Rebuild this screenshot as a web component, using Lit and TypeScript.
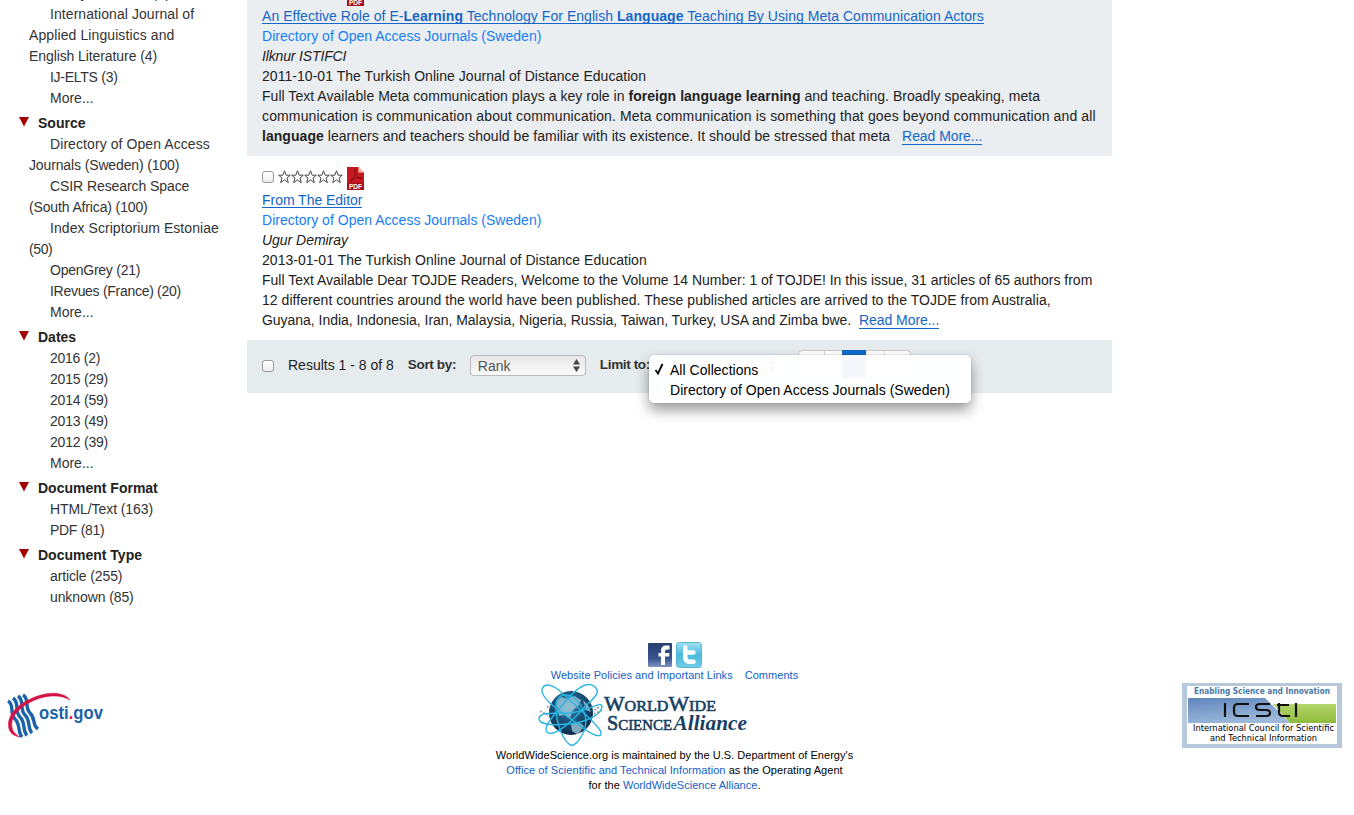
import { LitElement, html, css, svg } from 'lit';
import { customElement } from 'lit/decorators.js';
import { styleMap } from 'lit/directives/style-map.js';

type Line = [text: string, tracking: number];
interface Group { title: string; items: Line[][]; }

const groups: Group[] = [
  { title: '', items: [
    [['Study and Test (4)', .4]],
    [['International Journal of', .07], ['Applied Linguistics and', .1], ['English Literature (4)', -.09]],
    [['IJ-ELTS (3)', -.27]], [['More...', 0]]] },
  { title: 'Source', items: [
    [['Directory of Open Access', .08], ['Journals (Sweden) (100)', -.13]],
    [['CSIR Research Space', -.08], ['(South Africa) (100)', -.14]],
    [['Index Scriptorium Estoniae', .06], ['(50)', -.4]],
    [['OpenGrey (21)', -.25]], [['IRevues (France) (20)', -.29]], [['More...', 0]]] },
  { title: 'Dates', items: [
    [['2016 (2)', -.25]], [['2015 (29)', -.22]], [['2014 (59)', -.22]], [['2013 (49)', -.22]], [['2012 (39)', -.22]], [['More...', 0]]] },
  { title: 'Document Format', items: [[['HTML/Text (163)', -.08]], [['PDF (81)', -.3]]] },
  { title: 'Document Type', items: [[['article (255)', -.12]], [['unknown (85)', -.1]]] },
];

const track = (n: number) => styleMap({ letterSpacing: `${n}px` });

const pdfIcon = html`<svg class="pdf" width="18" height="24" viewBox="0 0 18 24">
  <path d="M0 0H11.500L17 5.500V23H0Z" fill="#c81922"/><path d="M0 15.500H17V23H0Z" fill="#a8121b"/>
  <path d="M11.500 0L17 5.500H11.500Z" fill="#f6c3b0"/>
  <path d="M3 14C7 12 9 7 8.500 3C8 1 7 3 8.500 6C10 10 13 12 15.500 11.500C15 10 8 10 3 14Z" fill="none" stroke="#7d0d13" stroke-width=".9"/>
  <text x="2" y="21.500" font-family="Liberation Sans" font-weight="700" font-size="6.500" textLength="13" fill="#fff">PDF</text></svg>`;

const star = (x: number) => svg`<path transform="translate(${x} 0)" d="M6.500 .8L8.200 5.200H12.300L9 8L10.300 12.700L6.500 9.900L2.700 12.700L4 8L.7 5.200H4.800Z" fill="#fff" stroke="#333" stroke-width=".9"/>`;

const arrows = html`<svg width="9" height="13"><path d="M4.500 0L8 5.500H1ZM4.500 13L8 7.500H1Z" fill="#444"/></svg>`;

@customElement('app-root')
export class AppRoot extends LitElement {
  static styles = css`
    :host { display: block; height: 815px; overflow: hidden; background: #fff; color: #222; font: 14px/20px "Liberation Sans", Arial, sans-serif; }
    * { box-sizing: border-box; }
    .page { display: flex; height: 642px; align-items: flex-start; }
    aside { width: 247px; height: 642px; padding: 0 0 0 29px; line-height: 21px; overflow: hidden; white-space: nowrap; color: #333; display: flex; flex-direction: column; margin-left: 0; }
    .item:first-child { margin-top: -17px; }
    .item { text-indent: 21px; }
    .line { display: block; }
    .item .line + .line { text-indent: 0; }
    .head { display: flex; margin: 4px 0 0 -10px; font-weight: bold; color: #222; height: 21px; }
    .head svg { margin: 4px 9px 0 0; }
    main { width: 865px; white-space: nowrap; }
    .result { padding: 6px 15px 10px; }
    .shade { background: #ebeef1; height: 156px; overflow: hidden; position: relative; }
    .shade .pdf { position: absolute; left: 100px; top: -17px; }
    .white { padding-top: 10px; height: 184px; }
    .icons { display: flex; height: 24px; align-items: flex-start; }
    .icons .check { margin-top: 5px; }
    .icons .stars { margin: 4px 3px 0 4px; }
    .icons .pdf { margin-top: 1px; }
    .check { width: 12px; height: 12px; border: 1px solid #999; border-radius: 3px; background: linear-gradient(#fff, #eee); flex: none; }
    .title, .more { color: #1466c8; border-bottom: 1px solid #1466c8; }
    .title { display: inline-block; height: 18px; line-height: 20px; }
    .titlerow { height: 20px; }
    .src { color: #187ef5; letter-spacing: .02px; }
    .t1 { letter-spacing: .041px; }
    .t2 { letter-spacing: .035px; }
    .t3 { letter-spacing: .137px; }
    .t4 { letter-spacing: .048px; }
    .t5 { letter-spacing: -.01px; }
    .t6 { letter-spacing: -.035px; }
    .t7 { letter-spacing: -.15px; }
    .more { margin-left: 8px; line-height: 16px; letter-spacing: -.06px; }
    .t6 .more { margin-left: 4px; }
    .bar { display: flex; height: 53px; background: #e6ebee; padding: 15px; position: relative; }
    .bar .check { margin-top: 5px; }
    .count { margin: 0 14px; }
    .bar b { color: #333; font-size: 13.5px; letter-spacing: -.35px; width: 48px; flex: none; }
    .select { margin: 0 14px; width: 116px; height: 21px; border: 1px solid #bbb; border-radius: 4px; background: linear-gradient(#e8e8e8, #fafafa); padding: 0 4px 0 7px; color: #555; display: flex; justify-content: space-between; align-items: center; flex: none; }
    .limit { width: 124px; margin-left: 9px; justify-content: flex-end; }
    .pages { position: absolute; left: 551px; top: 10px; width: 113px; height: 28px; border: 1px solid #ccc; border-radius: 4px; background: #fff; display: grid; grid-template-columns: 26px 18px 23px 19px 1fr; }
    .pages i { border-right: 1px solid #ddd; }
    .pages i:nth-child(3) { background: #0f69c8; margin: -1px 0 -1px -1px; border: 0; }
    .pages i:last-child { border: 0; }
    .menu { position: absolute; left: 402px; top: 15px; width: 322px; height: 48px; border-radius: 5px; background: rgba(255,255,255,.955); box-shadow: 0 0 1px rgba(0,0,0,.5), 0 7px 14px rgba(0,0,0,.4); padding: 5px 0 0 21px; color: #000; letter-spacing: .03px; }
    .menu svg { position: absolute; left: 5px; top: 8px; }
    footer { display: flex; justify-content: space-between; align-items: flex-start; }
    .osti { margin: 48px 0 0 5px; width: 100px; }
    .center { width: 400px; margin-left: 62px; text-align: center; font-size: 11px; line-height: 15px; color: #000; white-space: nowrap; letter-spacing: .03px; }
    .center a { color: #1460c8; }
    .social { display: flex; justify-content: center; gap: 4px; height: 26px; }
    .links { display: flex; justify-content: center; gap: 12px; letter-spacing: .05px; }
    .office { letter-spacing: .07px; }
    .wws { display: block; margin: 0 0 1px 61px; }
    .icsti { margin: 41px 12px 0 0; }
  `;

  render() {
    return html`
      <div class="page">
        <aside>${groups.map(g => html`
          ${g.title ? html`<div class="head"><svg width="10" height="10"><path d="M0 0H10L5 9.500Z" fill="#a00000"/></svg>${g.title}</div>` : ''}
          ${g.items.map(i => html`<div class="item">${i.map(([text, n]) => html`<span class="line" style=${track(n)}>${text}</span>`)}</div>`)}`)}
        </aside>
        <main>
          <div class="result shade">${pdfIcon}
            <div class="titlerow t1"><span class="title">An Effective Role of E-<b>Learning</b> Technology For English <b>Language</b> Teaching By Using Meta Communication Actors</span></div>
            <div class="src">Directory of Open Access Journals (Sweden)</div>
            <div class="t7"><em>Ilknur ISTIFCI</em></div>
            <div class="t1">2011-10-01 The Turkish Online Journal of Distance Education</div>
            <div class="t2">Full Text Available Meta communication plays a key role in <b>foreign language learning</b> and teaching. Broadly speaking, meta</div>
            <div class="t3">communication is communication about communication. Meta communication is something that goes beyond communication and all</div>
            <div class="t4"><b>language</b> learners and teachers should be familiar with its existence. It should be stressed that meta <span class="more">Read More...</span></div>
          </div>
          <div class="result white">
            <div class="icons"><span class="check"></span><svg class="stars" width="66" height="14">${[0, 13, 26, 39, 52].map(star)}</svg>${pdfIcon}</div>
            <div class="titlerow t6"><span class="title">From The Editor</span></div>
            <div class="src">Directory of Open Access Journals (Sweden)</div>
            <div class="t6"><em>Ugur Demiray</em></div>
            <div class="t2">2013-01-01 The Turkish Online Journal of Distance Education</div>
            <div class="t5">Full Text Available Dear TOJDE Readers, Welcome to the Volume 14 Number: 1 of TOJDE! In this issue, 31 articles of 65 authors from</div>
            <div class="t4">12 different countries around the world have been published. These published articles are arrived to the TOJDE from Australia,</div>
            <div class="t6">Guyana, India, Indonesia, Iran, Malaysia, Nigeria, Russia, Taiwan, Turkey, USA and Zimba bwe. <span class="more">Read More...</span></div>
          </div>
          <div class="bar">
            <span class="check"></span><span class="count">Results 1 - 8 of 8</span><b>Sort by:</b>
            <span class="select">Rank${arrows}</span>
            <b>Limit to:</b>
            <span class="select limit">${arrows}</span>
            <div class="pages"><i></i><i></i><i></i><i></i><i></i></div>
            <div class="menu"><svg width="12" height="13"><path d="M1.500 7L4 10.500L8.500 1" fill="none" stroke="#000" stroke-width="1.800"/></svg>All Collections<br>Directory of Open Access Journals (Sweden)</div>
          </div>
        </main>
      </div>
      <footer>
        <svg class="osti" width="100" height="50" viewBox="5 690 100 50">
          <g fill="none" stroke="#1b63a8" stroke-width="3.400">
            <path d="M8 701C15 705 9 713 15 719S17 731 22 737"/><path d="M13 698C20 703 14 711 20 717S22 730 27 735.500"/><path d="M18 696C25 701 19 709 25 715S27 728 32 733"/><path d="M23 695C30 699 24 707 30 713S32 725 38 729"/></g>
          <path d="M20 737C4 735 5 716 20 705C38 692 62 689 70 700C58 693 40 695 23 706.500C9 717 8 731 20 737Z" fill="#d31245" stroke="#d31245" stroke-width=".5"/>
          <text x="39" y="719" font-family="Liberation Sans" font-weight="700" font-size="18" textLength="64" lengthAdjust="spacingAndGlyphs" fill="#1b63a8">osti<tspan fill="#d31245">.</tspan>gov</text>
        </svg>
        <div class="center">
          <div class="social">
            <svg width="24" height="26" viewBox="0 0 24 26"><defs><linearGradient id="f" x2="0" y2="1"><stop stop-color="#293e70"/><stop offset=".65" stop-color="#39558f"/><stop offset="1" stop-color="#7d96c4"/></linearGradient></defs><rect y="1" width="24" height="24" rx="1" fill="url(#f)"/><path d="M13 23V14.500H10.500V11H13V9Q13 3.500 18 3.500H21.500V7.500H19Q17 7.500 17 9.500V11H21.500L21 14.500H17V23Z" fill="#fff"/></svg>
            <svg width="26" height="26" viewBox="0 0 26 26"><defs><linearGradient id="t" x2="0" y2="1"><stop stop-color="#a5e1f0"/><stop offset=".5" stop-color="#49b9dd"/><stop offset="1" stop-color="#74cde6"/></linearGradient></defs><rect x=".5" y=".5" width="25" height="25" rx="3" fill="url(#t)" stroke="#55b5d2"/><path d="M9.300 5.500V15.500Q9.300 19.800 13.500 19.800H17.500M9.500 10.500H17.500" fill="none" stroke="#fff" stroke-width="4.400" stroke-linecap="round"/></svg>
          </div>
          <div class="links"><a>Website Policies and Important Links</a><a>Comments</a></div>
          <svg class="wws" width="212" height="64" viewBox="536 683 212 64">
            <defs><radialGradient id="g" cx=".45" cy=".35" r=".7"><stop stop-color="#4f93b8"/><stop offset=".4" stop-color="#1d5b85"/><stop offset="1" stop-color="#08243f"/></radialGradient></defs>
            <path d="M540 711Q570 728 602 710M547 706Q570 730 600 706" fill="none" stroke="#9aa7ad" stroke-width="2" stroke-dasharray="2 1.500"/>
            <circle cx="571" cy="713" r="22" fill="url(#g)"/>
            <path d="M556 702L561 697L567 699L574 696L581 700L579 705L573 710L570 718L564 715L559 716ZM571 724L579 722L584 726L578 735L572 731ZM583 700L588 705L591 712L586 710Z" fill="#a6cfdf" opacity=".75"/>
            <g fill="none" stroke="#2ab4e1" stroke-width="1.400">
              <path d="M542 689C545 682 554 685 562 693C575 705 598 724 601 732C602 739 592 735 583 728C565 714 540 700 542 689Z"/>
              <path d="M594 686C586 681 575 690 565 702C552 717 543 727 547 732C553 738 570 723 580 712C592 699 603 693 594 686Z"/>
              <path d="M571 696C580 701 590 716 584 731C579 742 573 748 569 744C561 738 553 713 557 700C560 694 565 694 571 696Z"/>
              <path d="M539 718C541 711 554 714 571 713C590 710 602 700 602 707C601 716 583 723 567 724C551 726 538 724 539 718Z"/></g>
            <g font-family="Liberation Serif" font-size="15.500" fill="#173f63" stroke="#173f63" stroke-width=".6">
              <text x="604" y="711" textLength="112" lengthAdjust="spacingAndGlyphs"><tspan font-size="21">W</tspan>ORLD<tspan font-size="21">W</tspan>IDE</text>
              <text x="607" y="730" textLength="65" lengthAdjust="spacingAndGlyphs"><tspan font-size="21">S</tspan>CIENCE</text>
              <text x="673.500" y="730" font-size="21" font-style="italic" font-weight="700" textLength="73.500" lengthAdjust="spacingAndGlyphs" stroke="none">Alliance</text></g>
          </svg>
          <div>WorldWideScience.org is maintained by the U.S. Department of Energy's</div>
          <div class="office"><a>Office of Scientific and Technical Information</a> as the Operating Agent</div>
          <div>for the <a>WorldWideScience Alliance</a>.</div>
        </div>
        <svg class="icsti" width="160" height="65" viewBox="0 0 160 65">
          <defs><linearGradient id="b" x2=".4" y2="1"><stop stop-color="#5f86bd"/><stop offset="1" stop-color="#9cb8da"/></linearGradient><linearGradient id="gr" x2="0" y2="1"><stop stop-color="#b5d66c"/><stop offset="1" stop-color="#8dbb3c"/></linearGradient></defs>
          <rect width="160" height="65" fill="#b7c8db"/><rect x="5" y="3" width="150" height="58" fill="#fff"/>
          <path d="M6 15H83L108 40H6Z" fill="url(#b)"/><path d="M91 21H154V40H108Z" fill="url(#gr)"/>
          <g fill="none" stroke="#111" stroke-width="2.200"><path d="M43 20V34M67 21H56Q52 21 52 25V29Q52 33 56 33H67M88 21H78Q74 21 74 24Q74 27 78 27H84Q88 27 88 30Q88 33 84 33H74M97 20V29Q97 33 101 33H108M95 22H107M114 20V34"/></g>
          <g font-family="DejaVu Sans" font-size="8.500"><text x="12" y="11" fill="#4a78a8" font-weight="700" font-size="8" textLength="136" lengthAdjust="spacingAndGlyphs">Enabling Science and Innovation</text><text x="11" y="48" textLength="141" lengthAdjust="spacingAndGlyphs">International Council for Scientific</text><text x="28" y="58" textLength="107" lengthAdjust="spacingAndGlyphs">and Technical Information</text></g>
        </svg>
      </footer>`;
  }
}
